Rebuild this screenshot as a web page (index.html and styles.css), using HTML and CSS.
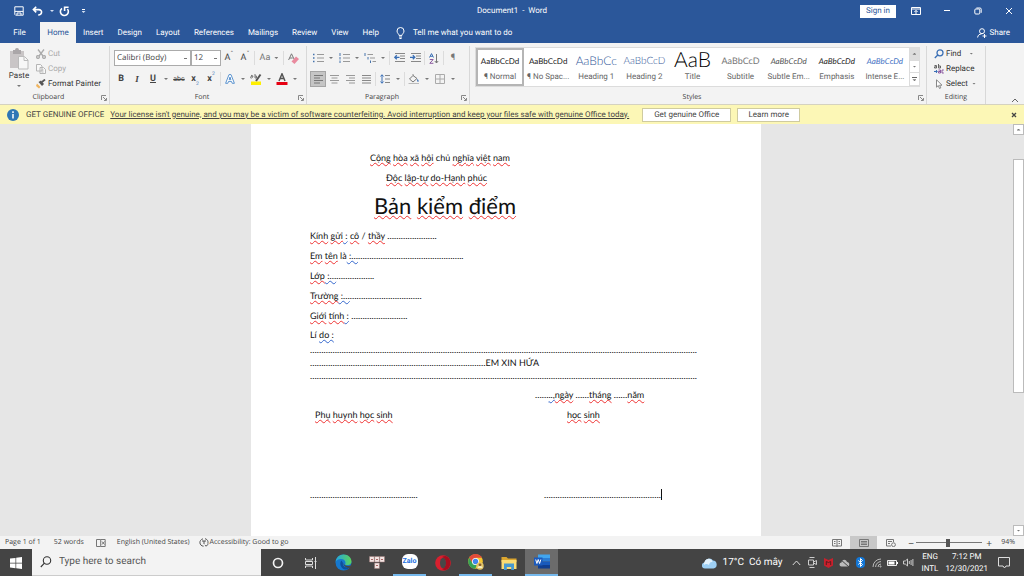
FILE: index.html
```html
<!DOCTYPE html>
<html lang="vi">
<head>
<meta charset="utf-8">
<title>Document1 - Word</title>
<link rel="stylesheet" href="styles.css">
</head>
<body>
<div class="app">
  <header class="head">
    <div class="titlebar">
      <div class="quick">
        <button class="ib" aria-label="Save"><svg width="10" height="10" viewBox="0 0 10 10" fill="none" stroke="#fff"><path d="M.8.8h8.4v8.4H1.6L.8 8.4zM.8 5.4h8.4M3 9V7h4v2"/></svg></button>
        <button class="ib" aria-label="Undo"><svg width="11" height="10" viewBox="0 0 11 10" fill="none" stroke="#fff" stroke-width="1.6"><path d="M4.2.8 1.4 3.6l2.8 2.8M1.6 3.6h5.2c3.8 0 3.8 5.4-.6 5.4"/></svg></button>
        <button class="ib tiny" aria-label="Undo options"><i class="caret light"></i></button>
        <button class="ib" aria-label="Redo"><svg width="11" height="11" viewBox="0 0 11 11" fill="none" stroke="#fff" stroke-width="1.6"><path d="M3 2.3a4 4 0 1 0 5.4.6M5.6 5V1.2h4"/></svg></button>
        <button class="ib more" aria-label="Customize toolbar"><i class="bar"></i><i class="caret light"></i></button>
      </div>
      <h1 class="doc-title">Document1&nbsp; -&nbsp; Word</h1>
      <div class="window">
        <button class="signin">Sign in</button>
        <button class="wb" aria-label="Ribbon display"><svg width="10" height="8" viewBox="0 0 10 8" fill="none" stroke="#fff"><path d="M.5.5h9v7h-9zM.5 2h9M5 7V3.5M3.4 5 5 3.4 6.600 5"/></svg></button>
        <button class="wb" aria-label="Minimize"><svg width="8" height="8" viewBox="0 0 8 8" stroke="#fff"><path d="M1 3.500h6"/></svg></button>
        <button class="wb" aria-label="Restore"><svg width="8" height="8" viewBox="0 0 8 8" fill="none" stroke="#fff"><rect x=".8" y="2" width="5" height="5" rx="1"/><path d="M2.400 1h3.600q1.200 0 1.200 1.200v3.600"/></svg></button>
        <button class="wb" aria-label="Close"><svg width="8" height="8" viewBox="0 0 8 8" stroke="#fff"><path d="m1 1 6 6M7 1 1 7"/></svg></button>
      </div>
    </div>
    <nav class="tabs">
      <button class="tab file">File</button><button class="tab on">Home</button><button class="tab">Insert</button><button class="tab">Design</button><button class="tab">Layout</button><button class="tab">References</button><button class="tab">Mailings</button><button class="tab">Review</button><button class="tab">View</button><button class="tab">Help</button>
      <button class="tell"><svg width="9" height="12" viewBox="0 0 9 12" fill="none" stroke="#fff"><path d="M3 8.400C3 7 1 6.200 1 4a3.500 3.500 0 0 1 7 0C8 6.200 6 7 6 8.400zM3 10h3M3.400 11.500h2.200"/></svg>Tell me what you want to do</button>
      <button class="share"><svg width="10" height="10" viewBox="0 0 10 10" fill="none" stroke="#fff"><circle cx="5" cy="3.200" r="2.500"/><path d="M.6 9.500C1 7 2.400 6 4.500 6M5.500 8h4M7.500 6v4"/></svg>Share</button>
    </nav>
  </header>

  <section class="ribbon" aria-label="Home ribbon">
    <div class="group clip">
      <div class="gbody clip-body">
        <button class="paste"><svg width="20" height="22" viewBox="0 0 20 22"><path fill="#c9c5c6" d="M1 3h14v17H1z"/><path fill="#aaa6a8" d="M4 2h2a2 2 0 0 1 4 0h2v4H4z"/><path fill="#f7f7f7" stroke="#bbb" d="M9.500 8.500h6l3.500 3.500v9H9.500z"/><path fill="none" stroke="#bbb" d="M15 9v3.500h4"/></svg>Paste<i class="caret"></i></button>
        <div class="rows">
          <button class="cmd off"><svg width="10" height="10" viewBox="0 0 10 10" fill="none" stroke="#aaa" stroke-width="1.300"><path d="M2 .5 7 7M8 .5 3 7"/><circle cx="2" cy="8" r="1.400"/><circle cx="8" cy="8" r="1.400"/></svg>Cut</button>
          <button class="cmd off"><svg width="10" height="10" viewBox="0 0 10 10" fill="#f8f8f8" stroke="#b5b5b5"><path d="M.5.500h4l1.500 1.500v5H.5zM4 3.500h3.500l2 2v4H4zM5.500 6h2M5.500 8h2"/></svg>Copy</button>
          <button class="cmd"><svg width="10" height="10" viewBox="0 0 10 10"><path fill="#efb45f" d="M1 4.500 4.500 8 3 9.500 0 7z"/><path fill="#555" d="M2.500 3 5 1.500 8 5 6 7z"/><path stroke="#555" stroke-width="1.700" d="M6 3 9 .5"/></svg>Format Painter</button>
        </div>
      </div>
      <div class="gname"><span>Clipboard</span><button class="launch" aria-label="Clipboard options"><svg width="6" height="6" viewBox="0 0 6 6" fill="none" stroke="#888"><path d="M.5 5V.5H5M2 2l3 3M5.500 3v2.500H3"/></svg></button></div>
    </div>

    <div class="group font">
      <div class="gbody tools">
        <div class="line">
          <select class="combo face" aria-label="Font"><option>Calibri (Body)</option></select>
          <select class="combo size" aria-label="Font size"><option>12</option></select>
          <button class="tb g" aria-label="Grow font">A<sup>ˆ</sup></button>
          <button class="tb g" aria-label="Shrink font">A<sup>ˇ</sup></button>
          <i class="sep"></i>
          <button class="tb wide" aria-label="Change case">Aa<i class="caret"></i></button>
          <i class="sep"></i>
          <button class="tb" aria-label="Clear formatting"><svg width="11" height="11" viewBox="0 0 11 11"><path d="M.6 7 3.500.8 6 6M1.700 5h3" fill="none" stroke="#777"/><path fill="#e98a9e" d="M3.500 8.500 8 3.500l3 2.500-4.500 5z"/></svg></button>
        </div>
        <div class="line">
          <button class="tb"><b>B</b></button><button class="tb"><em class="ital">I</em></button><button class="tb"><u><b>U</b></u></button><button class="ar" aria-label="Underline options"><i class="caret"></i></button>
          <button class="tb small"><s>abc</s></button><button class="tb"><b>x</b><sub>2</sub></button><button class="tb"><b>x</b><sup class="two">2</sup></button>
          <i class="sep"></i>
          <button class="tb" aria-label="Text effects"><svg width="10" height="10" viewBox="0 0 10 10" fill="#fff" stroke="#5b93cf"><path d="M.6 9.300 4 .6h2l3.400 8.700H7.200L6.500 7.400h-3l-.7 1.900zM4.100 5.600h1.800L5 3z"/></svg></button><button class="ar" aria-label="Effect options"><i class="caret"></i></button>
          <button class="tb" aria-label="Highlight"><svg width="12" height="12" viewBox="0 0 12 12"><path fill="#ffef00" d="M1 8.500h10V12H1z"/><path fill="none" stroke="#777" d="M1 2.500c3-1 2 3 0 2.500s0-2 1.800-1.300M5 1v4h1.500V3H5"/><path stroke="#555" stroke-width="2" d="M6 8 10.500 1.500"/></svg></button><button class="ar" aria-label="Highlight options"><i class="caret"></i></button>
          <button class="tb" aria-label="Font color"><svg width="12" height="12" viewBox="0 0 12 12"><path fill="#e60012" d="M.5 9h11v3H.5z"/><path fill="none" stroke="#555" stroke-width="1.500" d="M3 8 6 .8 9 8M4 5.500h4"/></svg></button><button class="ar" aria-label="Color options"><i class="caret"></i></button>
        </div>
      </div>
      <div class="gname"><span>Font</span><button class="launch" aria-label="Font options"><svg width="6" height="6" viewBox="0 0 6 6" fill="none" stroke="#888"><path d="M.5 5V.5H5M2 2l3 3M5.500 3v2.500H3"/></svg></button></div>
    </div>

    <div class="group para">
      <div class="gbody tools">
        <div class="line">
          <button class="tb" aria-label="Bullets"><svg width="11" height="10" viewBox="0 0 11 10"><path stroke="#999" d="M4 1.500h7M4 5h7M4 8.500h7"/><path stroke="#4674ad" stroke-width="1.500" d="M0 1.500h1.500M0 5h1.500M0 8.500h1.500"/></svg></button><button class="ar" aria-label="Bullet options"><i class="caret"></i></button>
          <button class="tb" aria-label="Numbering"><svg width="11" height="10" viewBox="0 0 11 10"><path stroke="#999" d="M4 1.500h7M4 5h7M4 8.500h7"/><path stroke="#4674ad" d="M1 0v3M1 4v2.500M1 7.500V10"/></svg></button><button class="ar" aria-label="Numbering options"><i class="caret"></i></button>
          <button class="tb" aria-label="Multilevel list"><svg width="12" height="10" viewBox="0 0 12 10"><path stroke="#999" d="M3.500 1.500H9M6 5h5M8.500 8.500H12"/><path stroke="#4674ad" d="M1 0v3M4 4v2.500M6.500 7.500V10"/></svg></button><button class="ar" aria-label="Multilevel options"><i class="caret"></i></button>
          <i class="sep"></i>
          <button class="tb" aria-label="Decrease indent"><svg width="11" height="10" viewBox="0 0 11 10"><path stroke="#888" d="M1 .5h10M6 3h5M6 5.500h5M1 8.500h10"/><path fill="none" stroke="#3a6fb5" stroke-width="1.300" d="M5.500 4.300H1M2.800 2.300.8 4.300l2 2"/></svg></button>
          <button class="tb" aria-label="Increase indent"><svg width="11" height="10" viewBox="0 0 11 10"><path stroke="#888" d="M1 .5h10M6 3h5M6 5.500h5M1 8.500h10"/><path fill="none" stroke="#3a6fb5" stroke-width="1.300" d="M0 4.300h4.500M2.800 2.300l2 2-2 2"/></svg></button>
          <i class="sep"></i>
          <button class="tb" aria-label="Sort"><svg width="10" height="11" viewBox="0 0 10 11" fill="none"><path stroke="#3a6fb5" d="M.5 4.500 2.500.6l2 3.900M1.200 3.300h2.600"/><path stroke="#8b5aa0" d="M.8 6.500h3.400L.8 10.300h3.600"/><path stroke="#777" d="M7.500 1v9M5.800 8l1.700 2 1.700-2"/></svg></button>
          <i class="sep"></i>
          <button class="tb pilcrow">¶</button>
        </div>
        <div class="line">
          <button class="tb picked" aria-label="Align left"><svg width="9" height="9" viewBox="0 0 9 9" stroke="#777"><path d="M0 .5h9M0 3h6M0 5.500h9M0 8h6"/></svg></button>
          <button class="tb" aria-label="Center"><svg width="9" height="9" viewBox="0 0 9 9" stroke="#999"><path d="M0 .5h9M1.500 3h6M0 5.500h9M1.500 8h6"/></svg></button>
          <button class="tb" aria-label="Align right"><svg width="9" height="9" viewBox="0 0 9 9" stroke="#999"><path d="M0 .5h9M3 3h6M0 5.500h9M3 8h6"/></svg></button>
          <button class="tb" aria-label="Justify"><svg width="9" height="9" viewBox="0 0 9 9" stroke="#888"><path d="M0 .5h9M0 3h9M0 5.500h9M0 8h9"/></svg></button>
          <i class="sep"></i>
          <button class="tb" aria-label="Line spacing"><svg width="10" height="10" viewBox="0 0 10 10" fill="none"><path stroke="#888" d="M5 1.500h5M5 5h5M5 8.500h5"/><path stroke="#3a6fb5" d="M2 .8v8.400M.4 2.500 2 .8l1.600 1.700M.4 7.500 2 9.200l1.600-1.700"/></svg></button><button class="ar" aria-label="Spacing options"><i class="caret"></i></button>
          <i class="sep"></i>
          <button class="tb" aria-label="Shading"><svg width="12" height="11" viewBox="0 0 12 11" fill="none"><path stroke="#777" d="M5 1.500 1.500 5l3.500 3L9 4.500 5 1.500V.2"/><path fill="#3a6fb5" d="M9.500 4.500 11 7.500H9z"/><path stroke="#bbb" d="M.5 9.500h10.500"/></svg></button><button class="ar" aria-label="Shading options"><i class="caret"></i></button>
          <button class="tb" aria-label="Borders"><svg width="10" height="10" viewBox="0 0 10 10" fill="none"><path stroke="#aaa" d="M.5.500h9v9h-9zM5 .5v9M.5 5h9"/></svg></button><button class="ar" aria-label="Border options"><i class="caret"></i></button>
        </div>
      </div>
      <div class="gname"><span>Paragraph</span><button class="launch" aria-label="Paragraph options"><svg width="6" height="6" viewBox="0 0 6 6" fill="none" stroke="#888"><path d="M.5 5V.5H5M2 2l3 3M5.500 3v2.500H3"/></svg></button></div>
    </div>

    <div class="group styles">
      <div class="gbody">
        <div class="gallery">
          <button class="style sel"><span class="smp">AaBbCcDd</span><span class="nm">¶ Normal</span></button>
          <button class="style"><span class="smp">AaBbCcDd</span><span class="nm">¶ No Spac...</span></button>
          <button class="style"><span class="smp h1s">AaBbCc</span><span class="nm">Heading 1</span></button>
          <button class="style"><span class="smp h2s">AaBbCcD</span><span class="nm">Heading 2</span></button>
          <button class="style"><span class="smp ttl">AaB</span><span class="nm">Title</span></button>
          <button class="style"><span class="smp sub">AaBbCcD</span><span class="nm">Subtitle</span></button>
          <button class="style"><span class="smp it">AaBbCcDd</span><span class="nm">Subtle Em...</span></button>
          <button class="style"><span class="smp it dark">AaBbCcDd</span><span class="nm">Emphasis</span></button>
          <button class="style"><span class="smp it blue">AaBbCcDd</span><span class="nm">Intense E...</span></button>
          <div class="gscroll"><button class="dim" aria-label="Previous styles"><i class="caret up"></i></button><button aria-label="Next styles"><i class="caret"></i></button><button aria-label="More styles"><i class="bar dk"></i><i class="caret"></i></button></div>
        </div>
      </div>
      <div class="gname"><span>Styles</span><button class="launch" aria-label="Styles options"><svg width="6" height="6" viewBox="0 0 6 6" fill="none" stroke="#888"><path d="M.5 5V.5H5M2 2l3 3M5.500 3v2.500H3"/></svg></button></div>
    </div>

    <div class="group edit">
      <div class="gbody rows">
        <button class="cmd"><svg width="10" height="10" viewBox="0 0 10 10" fill="none" stroke="#3a6fb5" stroke-width="1.300"><circle cx="6" cy="3.800" r="3"/><path d="M3.800 6 .8 9"/></svg>Find<i class="caret gap"></i></button>
        <button class="cmd"><svg width="10" height="10" viewBox="0 0 10 10" fill="none"><path stroke="#666" d="M.5 1.500h2V4h-2V2.800h2M4.500 0v4h2V2h-2"/><path stroke="#3a6fb5" d="M0 7.500h3M2 6l1.300 1.500L2 9"/><path stroke="#8b5aa0" d="M4.500 6h2v3h-2V7.500h2M9.800 6H8v3h1.800"/></svg>Replace</button>
        <button class="cmd"><svg width="10" height="10" viewBox="0 0 10 10" fill="#fff" stroke="#888"><path d="M2.500.8v7.400L4.300 6.500l1.200 3 1.300-.6-1.200-2.700H8z"/></svg>Select<i class="caret"></i></button>
      </div>
      <div class="gname"><span>Editing</span></div>
    </div>
    <button class="fold" aria-label="Collapse ribbon"><svg width="8" height="5" viewBox="0 0 8 5" fill="none" stroke="#666"><path d="m1 4 3-3 3 3"/></svg></button>
  </section>

  <aside class="notice">
    <svg width="12" height="12" viewBox="0 0 12 12"><circle cx="6" cy="6" r="6" fill="#2f76b5"/><path d="M6 5v4.500M6 2.300V4" stroke="#fff" stroke-width="1.500"/></svg>
    <strong>GET GENUINE OFFICE</strong>
    <a href="#genuine">Your license isn't genuine, and you may be a victim of software counterfeiting. Avoid interruption and keep your files safe with genuine Office today.</a>
    <button class="nbtn first">Get genuine Office</button>
    <button class="nbtn second">Learn more</button>
    <button class="nclose" aria-label="Dismiss"><svg width="6" height="6" viewBox="0 0 6 6" stroke="#444" stroke-width="1.300"><path d="m1 1 4 4M5 1 1 5"/></svg></button>
  </aside>

  <main class="work">
    <div class="canvas">
      <article class="page">
        <p class="p c1"><u class="r">Cộng</u> <u class="r">hòa</u> <u class="r">xã</u> <u class="r">hội</u> chủ <u class="r">nghĩa</u> <u class="r">việt</u> <u class="r">nam</u></p>
        <p class="p c2"><u class="r">Độc</u> <u class="r">lập-tự</u> <u class="r">do-Hạnh</u> <u class="r">phúc</u></p>
        <h2 class="big"><u class="r">Bản</u> <u class="r">kiểm</u> <u class="r">điểm</u></h2>
        <p class="p"><u class="r">Kính</u> <u class="r">gửi</u><u class="b"> :</u> <u class="r">cô</u> / <u class="r">thầy</u> ………………….</p>
        <p class="p"><u class="r">Em</u> <u class="r">tên</u> là<u class="b"> :…</u>………………………………………..</p>
        <p class="p"><u class="r">Lớp</u><u class="b"> :…</u>……………..</p>
        <p class="p"><u class="r">Trường</u><u class="b"> :…</u>…………………………..</p>
        <p class="p"><u class="r">Giới</u> <u class="r">tính</u><u class="b"> :</u> …………………….</p>
        <p class="p tight">Lí <u class="b">do :</u></p>
        <p class="fill">……………………………………………………………………………………………………………………………………………………….</p>
        <p class="fill">……………………………………………………………………EM XIN HỨA</p>
        <p class="fill last">……………………………………………………………………………………………………………………………………………………….</p>
        <p class="p date">……<u class="b">..,</u><u class="r">ngày</u> ……<u class="r">tháng</u> ……<u class="r">năm</u></p>
        <div class="pair"><p class="p left"><u class="r">Phụ</u> <u class="r">huynh</u> <u class="r">học</u> <u class="r">sinh</u></p><p class="p student"><u class="r">học</u> <u class="r">sinh</u></p></div>
        <div class="pair sign"><p class="p">………………………………………...</p><p class="p"><span class="cursor">…………………………………………….</span></p></div>
      </article>
    </div>
    <div class="vscroll"><button aria-label="Scroll up"><i class="caret up"></i></button><div class="track"><div class="thumb"></div></div><button aria-label="Scroll down"><i class="caret"></i></button></div>
  </main>

  <footer class="status">
    <span class="pg">Page 1 of 1</span><span class="wd">52 words</span>
    <svg class="book" width="10" height="8" viewBox="0 0 10 8" fill="none" stroke="#777"><path d="M.5.500h4.200v7H.5zM4.700.500h4.500v7H4.700M6 2.500l2.500 3M8.500 2.500 6 5.500"/></svg>
    <span class="lang">English (United States)</span>
    <span class="acc"><svg width="10" height="9" viewBox="0 0 10 9" fill="none" stroke="#555"><path d="M4 .8C-.6 2 .2 8 4.600 8.200M6 .7c3 .8 3.400 3.300 2.700 4.800M3 3h4M5 3v3M5.800 7l1.200 1.200L9.500 6"/></svg>Accessibility: Good to go</span>
    <div class="views">
      <button aria-label="Read mode"><svg width="10" height="8" viewBox="0 0 10 8" fill="none" stroke="#777"><path d="M.5.500h9v6.500h-9zM5 .5V8M2 2.500h1.500M2 4.500h1.500M6.500 2.500H8M6.500 4.500H8"/></svg></button>
      <button class="vsel" aria-label="Print layout"><svg width="10" height="8" viewBox="0 0 10 8" fill="none" stroke="#777"><path d="M.5.500h9v7h-9zM2 2.500h6M2 4h6M2 5.500h6"/></svg></button>
      <button aria-label="Web layout"><svg width="10" height="8" viewBox="0 0 10 8" fill="none" stroke="#777"><path d="M5 7H.5V.5h7V3M2 2.500h4M2 4.500h2"/><circle cx="7.500" cy="5.700" r="1.900"/></svg></button>
    </div>
    <button class="zb" aria-label="Zoom out">−</button><input class="zoom" type="range" min="0" max="100" value="48" aria-label="Zoom"><button class="zb" aria-label="Zoom in">+</button><span class="pct">94%</span>
  </footer>

  <div class="taskbar">
    <button class="start" aria-label="Start"><svg width="12" height="12" viewBox="0 0 12 12" fill="#fff"><path d="M0 1.600 5.500.9v4.800H0zM6.200.8 12 0v5.700H6.200zM0 6.400h5.500v4.800L0 10.500zM6.200 6.400H12V12l-5.800-.8z"/></svg></button>
    <label class="search"><svg width="12" height="12" viewBox="0 0 12 12" fill="none" stroke="#333" stroke-width="1.100"><circle cx="7" cy="4.500" r="3.700"/><path d="M4.400 7.200.8 11"/></svg><input type="text" placeholder="Type here to search" aria-label="Type here to search"></label>
    <div class="apps">
      <button aria-label="Cortana"><svg width="12" height="12" viewBox="0 0 12 12"><circle cx="6" cy="6" r="4.500" fill="none" stroke="#f2f2f2" stroke-width="1.700"/></svg></button>
      <button aria-label="Task view"><svg width="12" height="12" viewBox="0 0 12 12" fill="none" stroke="#ddd"><path d="M.5 1V3h7V1M.5 4.500h7v3h-7zM.5 11V9h7v2M10.500 0v12M9.500 4.500h2"/></svg></button>
      <button aria-label="Edge"><svg width="17" height="17" viewBox="0 0 17 17"><defs><linearGradient id="eg" x1="0" x2="1"><stop stop-color="#24a7e0"/><stop offset="1" stop-color="#5bd35b"/></linearGradient></defs><circle cx="8.500" cy="8.500" r="8" fill="#1678ce"/><path fill="url(#eg)" d="M.5 8C1 3.500 4.500.5 8.500.5c5 0 8 3.500 8 7 0 3-3 4-5.500 3.500-1.500-.4-.5-1.200-.5-2.300C10.500 6.500 8.500 5 6 5 3 5 1 6.500.5 8z"/><path fill="#0d4f9e" d="M6.500 6.500C4 9 5.500 14.500 10 15.500c3 .3 4.500-1.500 5.500-3-5 2-8.500-.5-7.500-3.500z"/><path fill="#474747" d="M8.500 8.500c0 2.500 2.500 3.800 6.500 3.300l2-1.300v2l-2 1.200c-4 .3-7-1.700-6.500-5.200z"/></svg></button>
      <button aria-label="Keyboard app"><svg width="16" height="13" viewBox="0 0 16 13"><path fill="#f3e5e3" stroke="#9b7774" stroke-width=".5" d="M.5.500h4.800v5.500H.5zM5.600.500h4.800v5.500H5.600zM10.700.500h4.800v5.500h-4.800zM5.600 7h4.800v5.500H5.600z"/><path stroke="#a66" d="M2 3.500h2M7 3.500h2M12 3.500h2M7 9.500h2"/></svg></button>
      <button class="run" aria-label="Zalo"><span class="zalo">Zalo</span></button>
      <button aria-label="Opera"><svg width="16" height="16" viewBox="0 0 16 16"><circle cx="8" cy="8" r="7.800" fill="#d9202f"/><path fill="#a70e1e" d="M11 1a7.800 7.800 0 0 1 0 14c-2 .5-4-1-4-1 5-1 5-11 0-12 0 0 2-1.500 4-1z"/><ellipse cx="8" cy="8" rx="3" ry="5.200" fill="#474747"/></svg></button>
      <button class="run" aria-label="Chrome"><svg width="16" height="16" viewBox="0 0 16 16"><circle cx="7.500" cy="7.500" r="7.300" fill="#f6c72f"/><path fill="#e24a3b" d="M1.200 3.800a7.300 7.300 0 0 1 12.700 0H7.500L4.300 9z"/><path fill="#36a255" d="M1.200 3.800a7.300 7.300 0 0 0 5.900 11L10.500 9 4.300 9z"/><circle cx="7.500" cy="7.500" r="3.500" fill="#fff"/><circle cx="7.500" cy="7.500" r="2.700" fill="#4286ee"/><circle cx="12" cy="12" r="3.700" fill="#e3c567"/><circle cx="12" cy="10.800" r="1.400" fill="#875c32"/><path fill="#f7f0c5" d="M9.500 14a2.500 2 0 0 1 5 0z"/></svg></button>
      <button aria-label="File Explorer"><svg width="16" height="14" viewBox="0 0 16 14"><path fill="#dba62f" d="M.5 1h5l1.500 1.500H15.500V6H.5z"/><path fill="#fbdc74" d="M.5 4h15v9H.5z"/><path fill="#489ad0" d="M3 7.500h10V14h-2.800v-3H5.800v3H3z"/></svg></button>
      <button class="run active" aria-label="Word"><svg width="16" height="15" viewBox="0 0 16 15"><path fill="#41a5ee" d="M4 .5h12V4H4z"/><path fill="#2b7cd3" d="M4 4h12v3.500H4z"/><path fill="#185abd" d="M4 7.500h12V11H4z"/><path fill="#103f91" d="M4 11h12v3.500H4z"/><path fill="#1b5abd" d="M0 3.500h8.500v8H0z"/><path fill="none" stroke="#fff" d="m1.700 5.500 1.200 4 1.300-4 1.400 4 1.200-4"/></svg></button>
    </div>
    <div class="tray">
      <button class="weather"><svg width="15" height="12" viewBox="0 0 15 12"><path fill="#9ed0f5" d="M3 11.500a3 3 0 0 1-.2-6A4.500 4.500 0 0 1 11 3.600a4 4 0 0 1 .5 7.900z"/><path fill="#e3f2fd" d="M2 7a5 5 0 0 1 4.500-5.300C9.500 1.500 10.500 4 10.500 5 8 4.500 7 7 7 8 5 6.500 3 7 2 8z"/></svg>17°C&nbsp; Có mây</button>
      <button aria-label="Show hidden icons"><svg width="9" height="6" viewBox="0 0 9 6" fill="none" stroke="#ddd"><path d="m.8 5 3.700-4 3.700 4"/></svg></button>
      <button aria-label="Meet now"><svg width="9" height="11" viewBox="0 0 9 11" fill="none" stroke="#ccc"><path d="M1.500.5h5M.5 3h5v5h-5zM5.500 5l3-1.500v4L5.500 6M1.500 10.500h5"/></svg></button>
      <button aria-label="Antivirus"><svg width="9" height="10" viewBox="0 0 9 10"><path fill="#c9202c" d="M0 0 4.500 2 9 0v7.500L4.500 10 0 7.500z"/><path fill="none" stroke="#571c20" d="M2.300 7V3.500l2.200 1 2.200-1V7"/></svg></button>
      <button aria-label="Cloud sync off"><svg width="11" height="8" viewBox="0 0 11 8"><path fill="#bbb" d="M2.500 7.500a2 2 0 0 1 0-4C3 0 7 0 8 3c3 0 3 4.500.5 4.500z"/><path stroke="#444" d="m1 0 9 8"/></svg></button>
      <button aria-label="Bluetooth"><svg width="9" height="11" viewBox="0 0 9 11"><rect width="9" height="11" rx="4" fill="#1377d7"/><path fill="none" stroke="#fff" d="m2.300 3.500 4.200 4-2 2V1.500l2 2-4.200 4"/></svg></button>
      <button aria-label="Network"><svg width="10" height="10" viewBox="0 0 10 10" fill="none" stroke="#bbb"><path d="M1 9A8 8 0 0 1 9 1M3.600 9A5.400 5.400 0 0 1 9 3.600M6 9a3 3 0 0 1 3-3"/><circle cx="8.500" cy="8.500" r=".6"/></svg></button>
      <button aria-label="Battery"><svg width="11" height="6" viewBox="0 0 11 6"><path fill="none" stroke="#eee" d="M.5.500h9v5h-9z"/><path fill="#fff" d="M1.500 1.500h6v3h-6zM10 2h1v2h-1z"/></svg></button>
      <button aria-label="Volume"><svg width="11" height="9" viewBox="0 0 11 9" fill="none" stroke="#ccc"><path d="M.5 3h1.800L4.500 1v7L2.300 6H.5zM6.300 3v3M8.100 2v5M9.900 1v7"/></svg></button>
      <button class="two-line">ENG<br>INTL</button>
      <button class="two-line clock">7:12 PM<br>12/30/2021</button>
      <button class="note" aria-label="Notifications"><svg width="12" height="12" viewBox="0 0 12 12" fill="none" stroke="#ddd"><path d="M.5.500h11v8.500H8L6.500 11 5 9H.5z"/></svg></button>
    </div>
  </div>
</div>
</body>
</html>
```
FILE: styles.css
```css
* { box-sizing: border-box; }
body { margin: 0; font-family: Roboto, "Noto Sans", sans-serif; font-size: 8px; line-height: 10px; color: #444; text-rendering: geometricPrecision; }
button, input, select { font: inherit; color: inherit; border: 0; background: none; padding: 0; margin: 0; text-rendering: inherit; }
button { display: flex; align-items: center; justify-content: center; white-space: nowrap; }
svg { flex: none; }
p, h1, h2 { margin: 0; font-weight: 400; }
.app { height: 100vh; display: flex; flex-direction: column; overflow: hidden; }

.caret { width: 4px; height: 2px; background: #777; clip-path: polygon(0 0, 100% 0, 50% 100%); flex: none; }
.caret.up { clip-path: polygon(50% 0, 100% 100%, 0 100%); }
.caret.light { background: #d5e0f2; }
.bar { width: 3px; height: 1px; background: #fff; }
.bar.dk { width: 5px; background: #666; }

.head { background: #2b579a; color: #fff; flex: none; }
.titlebar { display: grid; grid-template-columns: 1fr auto 1fr; align-items: center; height: 22px; }
.quick { display: flex; align-items: center; padding-left: 10px; }
.ib { width: 17px; height: 16px; margin-right: 2px; }
.ib.tiny { width: 8px; margin-right: 0; }
.ib.more { flex-direction: column; gap: 1px; }
.doc-title { font-size: 8px; line-height: 10px; }
.window { display: flex; justify-content: flex-end; align-items: center; }
.signin { background: #fff; color: #2b579a; width: 36px; height: 13px; margin-right: 4px; }
.wb { width: 31px; height: 20px; }
.tabs { display: flex; height: 21px; align-items: stretch; padding-left: 2px; }
.tab { padding: 0 7px; }
.tab.file { width: 38px; padding: 0 10px 0 7px; }
.tab.on { background: #f3f3f3; color: #2b579a; width: 36px; }
.tell { gap: 8px; margin-left: 10px; }
.share { margin-left: auto; margin-right: 14px; gap: 3px; }

.ribbon { display: flex; flex: none; background: #f3f3f3; height: 62px; border-bottom: 1px solid #d5d2c0; padding-top: 3px; }
.group { display: flex; flex-direction: column; border-right: 1px solid #d8d8d8; }
.gbody { flex: 1; }
.gname { display: flex; position: relative; justify-content: center; height: 10px; margin-bottom: 1px; font-family: "Open Sans", sans-serif; font-size: 7px; align-items: center; color: #444; }
.launch { position: absolute; right: 2px; bottom: 2px; }
.clip { width: 110px; }
.clip .gname, .font .gname, .para .gname, .styles .gname { padding-right: 12px; }
.clip-body { display: flex; padding-left: 4px; }
.paste { flex-direction: column; width: 30px; gap: 1px; color: #333; justify-content: flex-start; padding-top: 2px; }
.paste .caret { margin-top: 3px; }
.rows { display: flex; flex-direction: column; }
.cmd { height: 15px; justify-content: flex-start; gap: 2px; padding-left: 2px; color: #333; }
.cmd.off { color: #aaa; }
.cmd .caret { margin-left: 2px; }
.cmd .gap { margin-left: 6px; }
.font { width: 197px; }
.para { width: 163px; }
.tools { display: flex; flex-direction: column; gap: 5px; padding: 4px 2px 0 3px; }
.line { display: flex; align-items: center; height: 16px; }
.combo { height: 16px; border: 1px solid #ababab; background: #fff; appearance: none; border-radius: 0; padding-left: 2px; font-family: "Open Sans", sans-serif; font-size: 8px; line-height: 14px;
  background-image: linear-gradient(#777, #777); background-size: 3px 1px; background-repeat: no-repeat; background-position: right 3px center; }
.face { width: 77px; margin-left: 1px; }
.size { width: 30px; }
.tb { width: 16px; height: 16px; font-size: 9px; }
.tb sup { font-size: 7px; line-height: 8px; align-self: flex-start; }
.tb sub, .tb .two { font-size: 5px; line-height: 6px; color: #3a6fb5; }
.tb sub { align-self: flex-end; }
.tb.small { font-size: 7px; }
.tb.wide { width: 26px; gap: 4px; color: #777; }
.tb.picked { background: #c5c5c5; border: 1px solid #a5a5a5; }
.tb.pilcrow { color: #777; }
.ital { font-family: "Liberation Serif", serif; font-weight: 700; }
.ar { width: 10px; height: 16px; }
.sep { width: 1px; height: 14px; background: #dcdcdc; margin: 0 1px; }
.styles { flex: 1; min-width: 0; max-width: 457px; }
.styles .gbody { padding: 1px 6px 0 5px; }
.gallery { display: flex; background: #fff; border: 1px solid #dcdcdc; height: 40px; }
.style { flex: 1; min-width: 0; flex-direction: column; justify-content: flex-start; }
.style.sel { outline: 2px solid #b5b5b5; outline-offset: -2px; }
.smp { height: 22px; line-height: 26px; font-family: Lato, sans-serif; font-size: 8px; color: #222; }
.nm { color: #666; line-height: 14px; }
.h1s, .h2s, .blue { color: #2f5597; }
.h1s { font-size: 12px; font-weight: 300; }
.h2s { font-size: 10px; font-weight: 300; }
.ttl { font-size: 21px; line-height: 24px; font-weight: 300; color: #000; }
.sub { color: #777; font-size: 9px; }
.it { font-style: italic; color: #555; }
.dark { color: #222; }
.smp.blue { color: #4472c4; }
.gscroll { display: flex; flex-direction: column; width: 10px; border-left: 1px solid #dcdcdc; }
.gscroll button { flex: 1; flex-direction: column; gap: 1px; border-bottom: 1px solid #dcdcdc; }
.gscroll .dim { background: #ddd; }
.edit { width: 59px; }
.edit .cmd { padding-left: 7px; }
.fold { margin: auto 5px 1px auto; }

.notice { display: flex; align-items: center; flex: none; height: 19px; background: #fcf7b6; padding: 0 7px; color: #444; }
.notice strong { font-weight: 400; margin: 0 6px 0 7px; white-space: nowrap; }
.notice a { color: #444; white-space: nowrap; }
.nbtn { background: #fff; border: 1px solid #cfcba0; height: 14px; }
.first { width: 89px; margin-left: 13px; }
.second { width: 63px; margin-left: 6px; }
.nclose { margin-left: auto; }

.work { flex: 1; display: flex; min-height: 0; background: #e6e6e6; }
.canvas { flex: 1; display: flex; justify-content: center; padding-right: 1px; }
.page { width: 510px; background: #fff; padding: 24px 60px 0 59px; font-family: Lato, "Open Sans", sans-serif; font-size: 9px; color: #111; }
.p { line-height: 20px; white-space: nowrap; }
.c1 { padding-left: 60px; }
.c2 { padding-left: 76px; }
.big { font-size: 22px; line-height: 36px; padding: 0 0 2px 64px; white-space: nowrap; }
.r, .b { text-decoration: underline wavy #e33 1px; text-decoration-skip-ink: none; text-underline-offset: 1px; }
.b { text-decoration-color: #36c; }
.fill { line-height: 13px; white-space: nowrap; }
.tight { line-height: 17px; }
.last { margin-bottom: 3px; }
.date { padding-left: 225px; }
.pair { display: grid; grid-template-columns: 234px 1fr; }
.left { padding-left: 5px; }
.student { padding-left: 23px; }
.sign { margin-top: 60px; }
.cursor { border-right: 1px solid #111; }
.vscroll { width: 11px; display: flex; flex-direction: column; background: #e6e6e6; }
.vscroll button { height: 11px; background: #fff; border: 1px solid #bbb; }
.track { flex: 1; padding-top: 24px; }
.thumb { height: 64%; background: #fff; border: 1px solid #bbb; }

.status { display: flex; align-items: center; flex: none; height: 13px; background: #f3f3f3; font-family: "Open Sans", sans-serif; font-size: 7px; padding: 0 9px 0 5px; white-space: nowrap; }
.wd { margin-left: 13px; }
.book { margin-left: 12px; }
.lang { margin-left: 11px; }
.acc { display: flex; margin-left: 9px; gap: 1px; }
.views { display: flex; margin-left: auto; height: 13px; }
.views button { width: 27px; }
.vsel { background: #c8c8c8; }
.zb { width: 10px; font-size: 10px; margin-left: 2px; }
.zoom { appearance: none; width: 66px; height: 9px; background: linear-gradient(#777, #777) center / 100% 1px no-repeat; }
.zoom::-webkit-slider-thumb { appearance: none; width: 4px; height: 8px; background: #555; }
.pct { margin-left: 7px; }

.taskbar { display: flex; flex: none; height: 27px; background: #444; color: #fff; }
.start { width: 32px; }
.search { width: 229px; background: #f3f3f3; border-bottom: 1px solid #ccc; display: flex; align-items: center; padding-left: 8px; gap: 7px; }
.search input { flex: 1; min-width: 0; font-size: 10px; line-height: 16px; outline: 0; }
.search input::placeholder { color: #555; opacity: 1; }
.apps { display: flex; }
.apps button { width: 33px; }
.run { border-bottom: 2px solid #76b9ed; }
.apps .active { background: #6b6b6b; }
.zalo { background: #fff; color: #1a6fe0; font-weight: 700; font-size: 7px; line-height: 15px; width: 16px; border-radius: 6px; text-align: center; }
.tray { display: flex; margin-left: auto; padding-right: 8px; }
.tray button { width: 16px; }
.tray .weather { width: auto; gap: 6px; font-size: 10px; margin-right: 6px; }
.tray .two-line { width: auto; display: block; font-size: 8px; line-height: 12px; margin-left: 5px; text-align: center; }
.tray .clock { margin-left: 7px; }
.tray .note { width: 24px; margin-left: 4px; }
```
